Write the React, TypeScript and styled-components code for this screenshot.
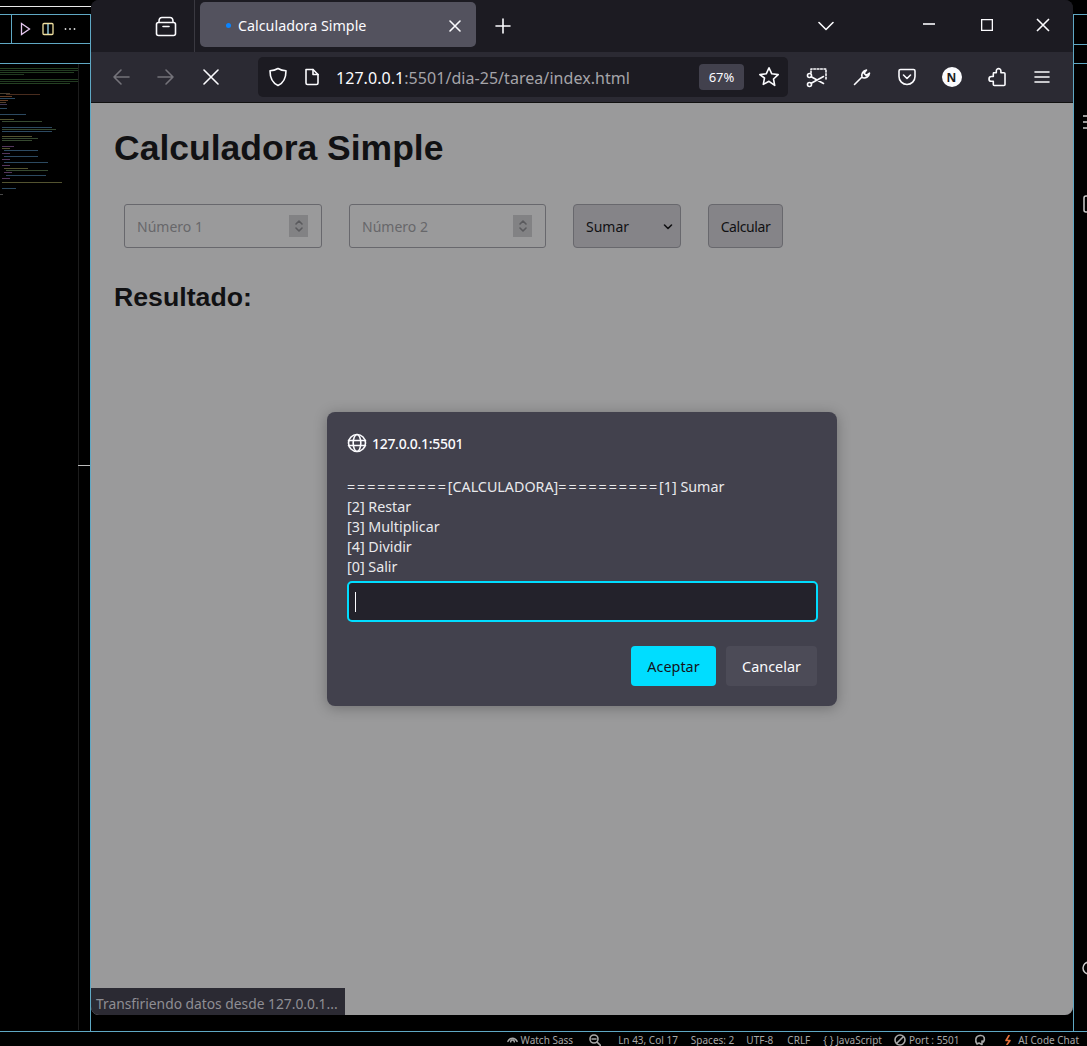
import React from "react"
import styled, { createGlobalStyle } from "styled-components"

const UI_FONT = `"Noto Sans", Roboto, sans-serif`

const GlobalStyle = createGlobalStyle`
  html, body {
    margin: 0;
    padding: 0;
    background: #000;
    overflow: hidden;
  }
  * {
    box-sizing: border-box;
  }
`

const Desktop = styled.div`
  position: relative;
  width: 1087px;
  height: 1046px;
  background: #000;
  overflow: hidden;
  font-family: ${UI_FONT};
`

// editor that sits behind the browser window
const EditorLine = styled.div<{ $x: number; $y: number; $w: number; $h: number; $c?: string }>`
  position: absolute;
  left: ${p => p.$x}px;
  top: ${p => p.$y}px;
  width: ${p => p.$w}px;
  height: ${p => p.$h}px;
  background: ${p => p.$c || "#5fa8c4"};
`

const EditorGlyphs = styled.svg`
  position: absolute;
  left: 0;
  top: 0;
`

const EditorStatus = styled.div`
  position: absolute;
  left: 0;
  right: 0;
  top: 1032px;
  height: 14px;
  padding: 2px 8px 0 0;
  display: flex;
  justify-content: flex-end;
  align-items: center;
  color: #a8a8a8;
  font-size: 10px;
  white-space: nowrap;
`

const StatusItem = styled.span<{ $gap?: number }>`
  display: inline-flex;
  align-items: center;
  gap: 3px;
  margin-left: ${p => p.$gap ?? 14}px;
`

const BrowserWindow = styled.div`
  position: absolute;
  left: 91px;
  top: 0;
  width: 982px;
  height: 1015px;
  display: flex;
  flex-direction: column;
  border-radius: 8px;
  overflow: hidden;
  background: #1c1b22;
`

const TabStrip = styled.div`
  height: 52px;
  flex: none;
  padding-right: 3px;
  display: flex;
  align-items: flex-start;
  background: #1c1b22;
  color: #fbfbfe;
`

const ViewSlot = styled.div`
  width: 104px;
  height: 52px;
  padding-left: 63px;
  display: flex;
  align-items: center;
  border-right: 1px solid #3a3941;
`

const Tab = styled.div`
  width: 276px;
  height: 45px;
  margin: 2px 0 0 5px;
  padding: 2px 15px 0 26px;
  display: flex;
  align-items: center;
  border-radius: 5px;
  background: #53525e;
  font-size: 14.3px;
`

const TabDot = styled.span`
  width: 5px;
  height: 5px;
  margin-right: 7px;
  border-radius: 50%;
  background: #0a84ff;
`

const TabTitle = styled.span`
  flex: 1;
`

const StripSlot = styled.div<{ $w: number; $after?: number; $up?: number }>`
  width: ${p => p.$w}px;
  height: 52px;
  margin-right: ${p => p.$after ?? 0}px;
  padding-bottom: ${p => p.$up ?? 0}px;
  flex: none;
  display: flex;
  align-items: center;
  justify-content: center;
`

const StripSpacer = styled.div`
  flex: 1;
`

const Toolbar = styled.div`
  height: 51px;
  flex: none;
  padding-left: 7px;
  display: flex;
  align-items: center;
  background: #2b2a33;
  border-bottom: 1px solid #111;
  color: #fbfbfe;
`

const ToolButton = styled.div<{ $dim?: boolean }>`
  width: 45px;
  height: 40px;
  flex: none;
  display: flex;
  align-items: center;
  justify-content: center;
  color: ${p => (p.$dim ? "#74737a" : "#fbfbfe")};
`

const UrlBar = styled.div`
  width: 530px;
  height: 40px;
  margin: 0 6px 0 25px;
  padding: 0 8px 0 10px;
  flex: none;
  display: flex;
  align-items: center;
  border-radius: 5px;
  background: #1c1b22;
`

const UrlIcon = styled.span<{ $w: number }>`
  width: ${p => p.$w}px;
  flex: none;
  display: flex;
`

const UrlText = styled.span`
  flex: 1;
  padding-top: 2px;
  font-size: 16px;
  letter-spacing: 0.05px;
  color: #a5a4a9;
  white-space: nowrap;
`

const UrlHost = styled.span`
  color: #fbfbfe;
`

const ZoomChip = styled.span`
  width: 45px;
  height: 26px;
  margin-right: 14px;
  display: flex;
  align-items: center;
  justify-content: center;
  border-radius: 4px;
  background: #42414d;
  font-size: 13px;
`

const AccountBadge = styled.span`
  width: 20px;
  height: 20px;
  display: flex;
  align-items: center;
  justify-content: center;
  border-radius: 50%;
  background: #fbfbfe;
  color: #1c1b22;
  font-size: 12px;
  font-weight: 700;
`

const PageArea = styled.div`
  position: relative;
  flex: 1;
  padding: 24px 23px;
  background: #9a9a9b;
  color: #111113;
  font-family: "Liberation Sans", Arial, sans-serif;
`

const PageTitle = styled.h1`
  margin: 0 0 34px;
  height: 43px;
  font-size: 35.5px;
  line-height: 43px;
  font-weight: 700;
`

const CalcForm = styled.div`
  display: flex;
  gap: 27px;
  margin-left: 10px;
  font-family: ${UI_FONT};
  font-size: 14px;
`

const NumberField = styled.div<{ $w: number }>`
  width: ${p => p.$w}px;
  height: 44px;
  padding: 1px 13px 0 12px;
  display: flex;
  align-items: center;
  justify-content: space-between;
  border: 1px solid #68686d;
  border-radius: 3px;
  color: #67676a;
`

const Spinner = styled.span`
  width: 19px;
  height: 22px;
  margin-top: -1px;
  display: flex;
  align-items: center;
  justify-content: center;
  background: #828284;
  color: #5a5a5d;
`

const SelectBox = styled.div`
  width: 108px;
  height: 44px;
  padding: 1px 7px 0 12px;
  display: flex;
  align-items: center;
  justify-content: space-between;
  border: 1px solid #68686d;
  border-radius: 4px;
  background: #858488;
`

const CalcButton = styled.button`
  width: 75px;
  height: 44px;
  padding: 1px 0 0;
  border: 1px solid #68686d;
  border-radius: 4px;
  background: #858488;
  color: #111113;
  font-family: inherit;
  font-size: 14px;
  letter-spacing: -0.4px;
`

const ResultTitle = styled.h2`
  margin: 33px 0 0;
  font-size: 26.7px;
  line-height: 32px;
  font-weight: 700;
`

const TransferStatus = styled.div`
  position: absolute;
  left: 0;
  bottom: 0;
  width: 254px;
  height: 27px;
  padding: 3px 0 0 5px;
  display: flex;
  align-items: center;
  background: #2b2a33;
  color: #8f8e94;
  font-family: ${UI_FONT};
  font-size: 13.8px;
  white-space: nowrap;
`

const PromptDialog = styled.div`
  position: absolute;
  left: 236px;
  top: 309px;
  width: 510px;
  height: 294px;
  padding: 20px;
  border-radius: 8px;
  background: #42414d;
  box-shadow: 0 2px 14px rgba(0, 0, 0, 0.28);
  color: #fbfbfe;
  font-family: ${UI_FONT};
`

const DialogOrigin = styled.div`
  height: 22px;
  display: flex;
  align-items: center;
  gap: 5px;
  font-size: 14px;
  font-weight: 500;
  letter-spacing: -0.3px;
`

const DialogMessage = styled.div`
  margin-top: 23px;
  font-size: 14.3px;
  line-height: 20px;
  color: #e9e9ec;
`

const MessageLine = styled.div`
  height: 20px;
  white-space: nowrap;
`

const RuleRun = styled.span`
  letter-spacing: 1.9px;
`

const PromptInput = styled.div`
  width: 471px;
  height: 41px;
  margin: 4px 0 0 0;
  padding-left: 6px;
  display: flex;
  align-items: center;
  border: 2px solid #00ddff;
  border-radius: 5px;
  background: #23222b;
`

const Caret = styled.span`
  width: 1px;
  height: 20px;
  background: #fbfbfe;
`

const DialogActions = styled.div`
  margin-top: 24px;
  display: flex;
  justify-content: flex-end;
  gap: 10px;
`

const DialogButton = styled.button<{ $primary?: boolean }>`
  height: 40px;
  width: ${p => (p.$primary ? 85 : 91)}px;
  padding: 1px 0 0;
  border: 0;
  border-radius: 4px;
  background: ${p => (p.$primary ? "#00ddff" : "#4c4b57")};
  color: ${p => (p.$primary ? "#15141a" : "#fbfbfe")};
  font-family: ${UI_FONT};
  font-size: 14.4px;
`

const Svg = styled.svg`
  display: block;
  fill: none;
  stroke: currentColor;
  stroke-width: 1.6;
  stroke-linecap: round;
  stroke-linejoin: round;
`

const Icon = ({ size = 20, box = 20, sw, children }: { size?: number; box?: number; sw?: number; children: React.ReactNode }) => (
  <Svg width={size} height={size} viewBox={`0 0 ${box} ${box}`} strokeWidth={sw}>{children}</Svg>
)

// rough picture of the editor minimap: y, x, width, colour
const MINIMAP: [number, number, number, string][] = [
  [68, 0, 78, "#3d6b3a"], [70, 0, 78, "#3a6238"], [72, 0, 74, "#3d6b3a"], [74, 0, 24, "#3a6238"],
  [79, 0, 78, "#3d6b3a"], [81, 0, 78, "#3a6238"], [83, 0, 70, "#3d6b3a"],
  [93, 0, 10, "#7a6a52"], [94, 6, 34, "#7a4a32"], [96, 0, 12, "#a8663c"], [98, 0, 15, "#4a7aa0"],
  [100, 0, 8, "#a8663c"], [102, 0, 6, "#8a6a4a"], [104, 0, 7, "#6a5a8a"], [108, 0, 7, "#4a7aa0"],
  [114, 0, 26, "#4a7aa0"], [119, 0, 14, "#8a8a50"], [121, 2, 40, "#5a7a50"],
  [127, 2, 50, "#4a7aa0"], [129, 2, 54, "#5a7a50"], [131, 2, 50, "#4a7aa0"],
  [136, 2, 30, "#8a8a50"], [138, 2, 36, "#5a7a50"], [140, 2, 30, "#5a7a50"],
  [146, 2, 12, "#8a5a9a"], [148, 2, 8, "#8a8a50"], [150, 4, 34, "#4a7aa0"],
  [153, 2, 8, "#8a5a9a"], [156, 4, 34, "#4a7aa0"], [159, 2, 8, "#8a5a9a"],
  [162, 4, 44, "#4a7aa0"], [165, 2, 8, "#8a5a9a"], [168, 4, 24, "#8a8a50"],
  [170, 6, 42, "#5a7a50"], [172, 4, 8, "#8a5a9a"], [175, 6, 40, "#4a7aa0"],
  [178, 2, 8, "#8a5a9a"], [182, 2, 60, "#8a8a50"], [188, 2, 14, "#4a7aa0"], [194, 0, 3, "#777"],
]

const ShotIcon = () => (
  <Icon size={22} box={22} sw={1.4}>
    <path d="M5 7V3h15v11" strokeDasharray="1.7 1.7" />
    <circle cx="3.500" cy="9.500" r="2" />
    <circle cx="3.500" cy="18.500" r="2" />
    <path d="M5.200 10.800L17.500 17.500M5.200 17.200L17.500 10.500" />
  </Icon>
)

const PuzzleIcon = () => (
  <Icon size={20} box={20} sw={1.5}>
    <path d="M6 6.200h2.800V4.400a2.300 2.300 0 1 1 4.600 0v1.800h3.100c.6 0 1 .4 1 1V18c0 .6-.4 1-1 1H6.800c-.6 0-1-.4-1-1v-3.200H3.900a2.400 2.400 0 1 1 0-4.800h1.900V7.200c0-.6.4-1 1-1z" transform="translate(0.500 -0.500)" />
  </Icon>
)

const SpinnerArrows = () => (
  <Icon size={14} box={14} sw={1.1}><path d="M4 5l3-3 3 3M4 9l3 3 3-3" /></Icon>
)

export default function App() {
  return (
    <Desktop>
      <GlobalStyle />
      <EditorLine $x={0} $y={6} $w={91} $h={1} $c="#e8e8e8" />
      <EditorLine $x={0} $y={14} $w={91} $h={1} />
      <EditorLine $x={0} $y={43} $w={91} $h={1} />
      <EditorLine $x={0} $y={63} $w={91} $h={1} />
      <EditorLine $x={11} $y={14} $w={1} $h={30} />
      <EditorLine $x={78} $y={64} $w={1} $h={966} $c="#1c1c1c" />
      <EditorLine $x={78} $y={465} $w={12} $h={1} $c="#bbb" />
      <EditorLine $x={90} $y={14} $w={1} $h={1017} />
      <EditorLine $x={1073} $y={14} $w={1} $h={1017} />
      <EditorLine $x={1073} $y={14} $w={14} $h={1} />
      <EditorLine $x={1073} $y={44} $w={14} $h={1} />
      <EditorLine $x={1073} $y={63} $w={14} $h={1} />
      <EditorLine $x={0} $y={1031} $w={1087} $h={1} />

      <EditorGlyphs width={1087} height={1031} fill="none">
        <g opacity="0.6">
          {MINIMAP.map(([y, x, w, c], i) => (
            <rect key={i} x={x} y={y} width={w} height={1} fill={c} />
          ))}
        </g>
        <path d="M21.500 23.500L29.500 29L21.500 34.500z" stroke="#e6c8f0" strokeWidth="1.300" />
        <rect x="43" y="23.500" width="10" height="11" rx="1" stroke="#f0e0a0" strokeWidth="1.300" />
        <path d="M48 24v10" stroke="#9fdcf0" strokeWidth="1.300" />
        <circle cx="65.500" cy="29" r="0.900" fill="#ddd" />
        <circle cx="70" cy="29" r="0.900" fill="#ddd" />
        <circle cx="74.500" cy="29" r="0.900" fill="#ddd" />
        <path d="M1083 116h4M1083 122h4M1083 128h4" stroke="#ccc" strokeWidth="1.500" />
        <rect x="1084" y="196" width="6" height="16" rx="2" stroke="#ccc" strokeWidth="1.500" />
        <circle cx="1089" cy="968" r="6" stroke="#ccc" strokeWidth="1.500" />
      </EditorGlyphs>

      <BrowserWindow>
        <TabStrip>
          <ViewSlot>
            <Icon size={24} box={24} sw={1.8}>
              <path d="M5 7.500C5 5 6 3.500 8 3.500h8c2 0 3 1.500 3 4" />
              <rect x="2.500" y="8.500" width="19" height="13" rx="2" />
              <path d="M9 12.500h6" />
            </Icon>
          </ViewSlot>
          <Tab>
            <TabDot />
            <TabTitle>Calculadora Simple</TabTitle>
            <Icon size={12} box={12} sw={1.3}><path d="M1 1l10 10M11 1L1 11" /></Icon>
          </Tab>
          <StripSlot $w={54}>
            <Icon size={16} box={16} sw={1.7}><path d="M8 1v14M1 8h14" /></Icon>
          </StripSlot>
          <StripSpacer />
          <StripSlot $w={56} $after={46}>
            <Icon size={16} box={16} sw={1.4}><path d="M1 4.500l7 7 7-7" /></Icon>
          </StripSlot>
          <StripSlot $w={58} $up={5}>
            <Icon size={14} box={14} sw={1}><path d="M1 7h12" strokeLinecap="butt" /></Icon>
          </StripSlot>
          <StripSlot $w={58} $up={3}>
            <Icon size={12} box={12} sw={1}><rect x=".5" y=".5" width="11" height="11" /></Icon>
          </StripSlot>
          <StripSlot $w={54} $up={3}>
            <Icon size={14} box={14} sw={1}><path d="M1 1l12 12M13 1L1 13" strokeLinecap="butt" /></Icon>
          </StripSlot>
        </TabStrip>

        <Toolbar>
          <ToolButton $dim>
            <Icon><path d="M18 10H3M10 3l-7 7 7 7" /></Icon>
          </ToolButton>
          <ToolButton $dim>
            <Icon><path d="M2 10h15M10 3l7 7-7 7" /></Icon>
          </ToolButton>
          <ToolButton>
            <Icon size={16} box={16} sw={1.5}><path d="M1 1l14 14M15 1L1 15" /></Icon>
          </ToolButton>
          <UrlBar>
            <UrlIcon $w={35}>
              <Icon>
                <path d="M10 1.500c2.500 1.500 5 2.200 8 2.300 0 7-1.800 12-8 14.700C3.800 15.800 2 10.800 2 3.800c3-.1 5.500-.8 8-2.300z" />
              </Icon>
            </UrlIcon>
            <UrlIcon $w={33}>
              <Icon size={18} box={18}>
                <path d="M3 1.500h7l5 5V15a1.500 1.500 0 0 1-1.500 1.500h-9A1.500 1.500 0 0 1 3 15z" />
                <path d="M10 1.500v5h5" />
              </Icon>
            </UrlIcon>
            <UrlText><UrlHost>127.0.0.1</UrlHost>:5501/dia-25/tarea/index.html</UrlText>
            <ZoomChip>67%</ZoomChip>
            <Icon size={22} box={22} sw={1.5}>
              <path d="M11 1.800l2.800 6 6.400.8-4.700 4.400 1.200 6.400L11 15.300l-5.700 3.100 1.200-6.400L1.800 8.600l6.400-.8z" />
            </Icon>
          </UrlBar>
          <ToolButton><ShotIcon /></ToolButton>
          <ToolButton>
            <Icon size={20} box={20} sw={1.7}>
              <path d="M2.500 17.500L10 10M10 10c-.8-3 .8-6.500 4.500-7L12 6.200l2.200 2.200 3.300-2.300c-.5 3.600-3.500 5.300-6.600 4.700" />
            </Icon>
          </ToolButton>
          <ToolButton>
            <Icon size={20} box={20} sw={1.5}>
              <path d="M3.500 2.500h13a1.500 1.500 0 0 1 1.500 1.500v5.500c0 4.500-3.500 8-8 8s-8-3.500-8-8V4a1.500 1.500 0 0 1 1.500-1.500z" />
              <path d="M6.500 8l3.500 3.500L13.500 8" />
            </Icon>
          </ToolButton>
          <ToolButton><AccountBadge>N</AccountBadge></ToolButton>
          <ToolButton><PuzzleIcon /></ToolButton>
          <ToolButton>
            <Icon size={18} box={18} sw={1.5}><path d="M2 4h14M2 9h14M2 14h14" /></Icon>
          </ToolButton>
        </Toolbar>

        <PageArea>
          <PageTitle>Calculadora Simple</PageTitle>
          <CalcForm>
            <NumberField $w={198}>
              Número 1
              <Spinner><SpinnerArrows /></Spinner>
            </NumberField>
            <NumberField $w={197}>
              Número 2
              <Spinner><SpinnerArrows /></Spinner>
            </NumberField>
            <SelectBox>
              Sumar
              <Icon size={10} box={10} sw={1.5}><path d="M1.500 3l3.500 3.500L8.500 3" /></Icon>
            </SelectBox>
            <CalcButton>Calcular</CalcButton>
          </CalcForm>
          <ResultTitle>Resultado:</ResultTitle>

          <TransferStatus>Transfiriendo datos desde 127.0.0.1...</TransferStatus>

          <PromptDialog>
            <DialogOrigin>
              <Icon size={20} box={20} sw={1.4}>
                <circle cx="10" cy="10" r="8.500" />
                <ellipse cx="10" cy="10" rx="3.800" ry="8.500" />
                <path d="M1.500 7.500h17M1.500 12.500h17" />
              </Icon>
              127.0.0.1:5501
            </DialogOrigin>
            <DialogMessage>
              <MessageLine><RuleRun>==========</RuleRun>[CALCULADORA]<RuleRun>==========</RuleRun>[1] Sumar</MessageLine>
              <MessageLine>[2] Restar</MessageLine>
              <MessageLine>[3] Multiplicar</MessageLine>
              <MessageLine>[4] Dividir</MessageLine>
              <MessageLine>[0] Salir</MessageLine>
            </DialogMessage>
            <PromptInput><Caret /></PromptInput>
            <DialogActions>
              <DialogButton $primary>Aceptar</DialogButton>
              <DialogButton>Cancelar</DialogButton>
            </DialogActions>
          </PromptDialog>
        </PageArea>
      </BrowserWindow>

      <EditorStatus>
        <StatusItem $gap={0}>
          <Icon size={11} box={12} sw={1}><path d="M1 7c2-4.500 8-4.500 10 0M4 7.500a2 2 0 1 1 4 0" /></Icon>
          Watch Sass
        </StatusItem>
        <StatusItem $gap={16}>
          <Icon size={12} box={12} sw={1}><circle cx="5" cy="5" r="4" /><path d="M8 8l3.500 3.500M3 5h4" /></Icon>
        </StatusItem>
        <StatusItem $gap={17}>Ln 43, Col 17</StatusItem>
        <StatusItem $gap={13}>Spaces: 2</StatusItem>
        <StatusItem $gap={12}>UTF-8</StatusItem>
        <StatusItem $gap={14}>CRLF</StatusItem>
        <StatusItem $gap={13}>{"{ }"}&nbsp;JavaScript</StatusItem>
        <StatusItem $gap={12}>
          <Icon size={12} box={12} sw={1}><circle cx="6" cy="6" r="5" /><path d="M2.500 9.500l7-7" /></Icon>
          Port : 5501
        </StatusItem>
        <StatusItem>
          <Icon size={12} box={12} sw={1}><path d="M3 10c-2-3-2-8 3-8.500S11 5 9.500 8L8 7v3.500L5 9z" /></Icon>
        </StatusItem>
        <StatusItem $gap={17}>
          <Icon size={10} box={10} sw={1}><path d="M6 0.500L3 5.500h4L4 9.500" stroke="#e8703a" /></Icon>
          &nbsp;AI Code Chat
        </StatusItem>
      </EditorStatus>
    </Desktop>
  )
}
